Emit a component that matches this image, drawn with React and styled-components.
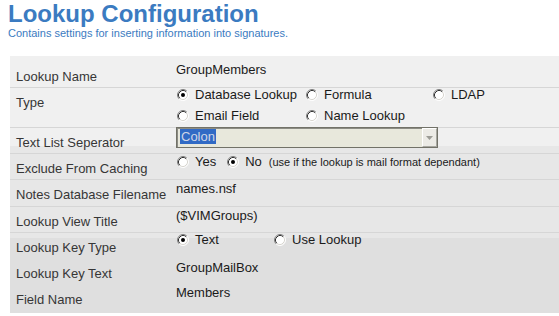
import React from 'react';
import styled, { createGlobalStyle } from 'styled-components';

const GlobalStyle = createGlobalStyle`
  html, body { margin: 0; padding: 0; background: #ffffff; overflow: hidden; }
  body { font-family: "Liberation Sans", Arial, sans-serif; }
`;

const Page = styled.div`
  padding-left: 8px;
`;

const Title = styled.h1`
  margin: 0;
  font-size: 24px;
  line-height: 27px;
  font-weight: bold;
  color: #3b7bc1;
`;

const Subtitle = styled.p`
  margin: 0 0 16px;
  font-size: 11px;
  line-height: 13px;
  color: #3b7bc1;
`;

const Form = styled.div`
  margin-left: 2px;
  padding-top: 6px;
  font-size: 13px;
  background: linear-gradient(
    to bottom,
    #f0f0f0 0px,
    #f0f0f0 90px,
    #e7e7e7 90px,
    #e7e7e7 182px,
    #dfdfdf 182px
  );
`;

const Row = styled.div`
  display: grid;
  grid-template-columns: 166px 1fr;
  box-sizing: border-box;
  height: ${(p) => p.$h}px;
  border-bottom: ${(p) => (p.$line ? '1px solid #d6d6d6' : 'none')};
`;

const Label = styled.div`
  padding: 7px 0 0 6px;
  line-height: 15px;
  color: #363636;
  white-space: nowrap;
`;

const Value = styled.div`
  padding-top: ${(p) => p.$top ?? 1}px;
  line-height: 15px;
  color: #1a1a1a;
  white-space: nowrap;
`;

const Options = styled.div`
  display: grid;
  grid-template-columns: ${(p) => p.$cols};
  row-gap: 8px;
`;

const InlineOptions = styled.div`
  display: flex;
  align-items: center;
  gap: 10px;
`;

const Option = styled.label`
  display: flex;
  align-items: center;
  gap: 6px;
  height: 13px;
  margin-left: 1px;
  line-height: 15px;
  color: #1a1a1a;
`;

const Note = styled.span`
  margin-left: 7px;
  font-size: 11px;
`;

const Select = styled.div`
  display: flex;
  box-sizing: border-box;
  width: 262px;
  height: 21px;
  margin-top: -1px;
  border: 1px solid #727268;
  box-shadow: inset 1px 1px 0 #8c8c84;
  background: #e8e8dc;
  padding: 1px 0 0 3px;
`;

const SelectText = styled.span`
  align-self: flex-start;
  height: 15px;
  line-height: 15px;
  padding: 0 1px 0 1px;
  background: #316ac5;
  color: #cfd6e6;
`;

const ArrowButton = styled.span`
  margin-left: auto;
  margin-top: -1px;
  width: 15px;
  height: 19px;
  box-sizing: border-box;
  display: flex;
  align-items: center;
  justify-content: center;
  background: #ecebe6;
  border-top: 1px solid #ffffff;
  border-left: 1px solid #ffffff;
  border-right: 1px solid #a7a7a0;
  border-bottom: 1px solid #a7a7a0;
`;

const Radio = ({ checked }) => (
  <svg width="12" height="12" viewBox="0 0 12 12" aria-hidden="true">
    <circle cx="6" cy="6" r="5" fill="#ffffff" />
    <path d="M2.11 9.89 A5.5 5.5 0 0 1 9.89 2.11" fill="none" stroke="#808080" strokeWidth="1" />
    <path d="M9.89 2.11 A5.5 5.5 0 0 1 2.11 9.89" fill="none" stroke="#ffffff" strokeWidth="1" />
    <path d="M2.82 9.18 A4.5 4.5 0 0 1 9.18 2.82" fill="none" stroke="#303030" strokeWidth="1" />
    <path d="M9.18 2.82 A4.5 4.5 0 0 1 2.82 9.18" fill="none" stroke="#d8d6d0" strokeWidth="1" />
    {checked && <circle cx="6" cy="6" r="2" fill="#000000" />}
  </svg>
);

const Choice = ({ checked, children }) => (
  <Option>
    <Radio checked={checked} />
    <span>{children}</span>
  </Option>
);

export default function App() {
  return (
    <Page>
      <GlobalStyle />
      <Title>Lookup Configuration</Title>
      <Subtitle>Contains settings for inserting information into signatures.</Subtitle>
      <Form>
        <Row $h={26} $line>
          <Label>Lookup Name</Label>
          <Value $top={0}>GroupMembers</Value>
        </Row>
        <Row $h={40} $line>
          <Label>Type</Label>
          <Value $top={0}>
            <Options $cols="129px 127px auto">
              <Choice checked>Database Lookup</Choice>
              <Choice>Formula</Choice>
              <Choice>LDAP</Choice>
              <Choice>Email Field</Choice>
              <Choice>Name Lookup</Choice>
            </Options>
          </Value>
        </Row>
        <Row $h={26} $line>
          <Label>Text List Seperator</Label>
          <Value $top={0}>
            <Select>
              <SelectText>Colon</SelectText>
              <ArrowButton>
                <svg width="7" height="4" viewBox="0 0 7 4" aria-hidden="true">
                  <path d="M0 0 H7 L3.5 4 Z" fill="#9c9c96" />
                </svg>
              </ArrowButton>
            </Select>
          </Value>
        </Row>
        <Row $h={26} $line>
          <Label>Exclude From Caching</Label>
          <Value $top={1}>
            <InlineOptions>
              <Choice>Yes</Choice>
              <Choice checked>
                No<Note>(use if the lookup is mail format dependant)</Note>
              </Choice>
            </InlineOptions>
          </Value>
        </Row>
        <Row $h={27} $line>
          <Label>Notes Database Filename</Label>
          <Value>names.nsf</Value>
        </Row>
        <Row $h={26} $line>
          <Label>Lookup View Title</Label>
          <Value>($VIMGroups)</Value>
        </Row>
        <Row $h={26}>
          <Label>Lookup Key Type</Label>
          <Value $top={0}>
            <Options $cols="97px auto">
              <Choice checked>Text</Choice>
              <Choice>Use Lookup</Choice>
            </Options>
          </Value>
        </Row>
        <Row $h={26}>
          <Label>Lookup Key Text</Label>
          <Value>GroupMailBox</Value>
        </Row>
        <Row $h={28}>
          <Label>Field Name</Label>
          <Value $top={0}>Members</Value>
        </Row>
      </Form>
    </Page>
  );
}
